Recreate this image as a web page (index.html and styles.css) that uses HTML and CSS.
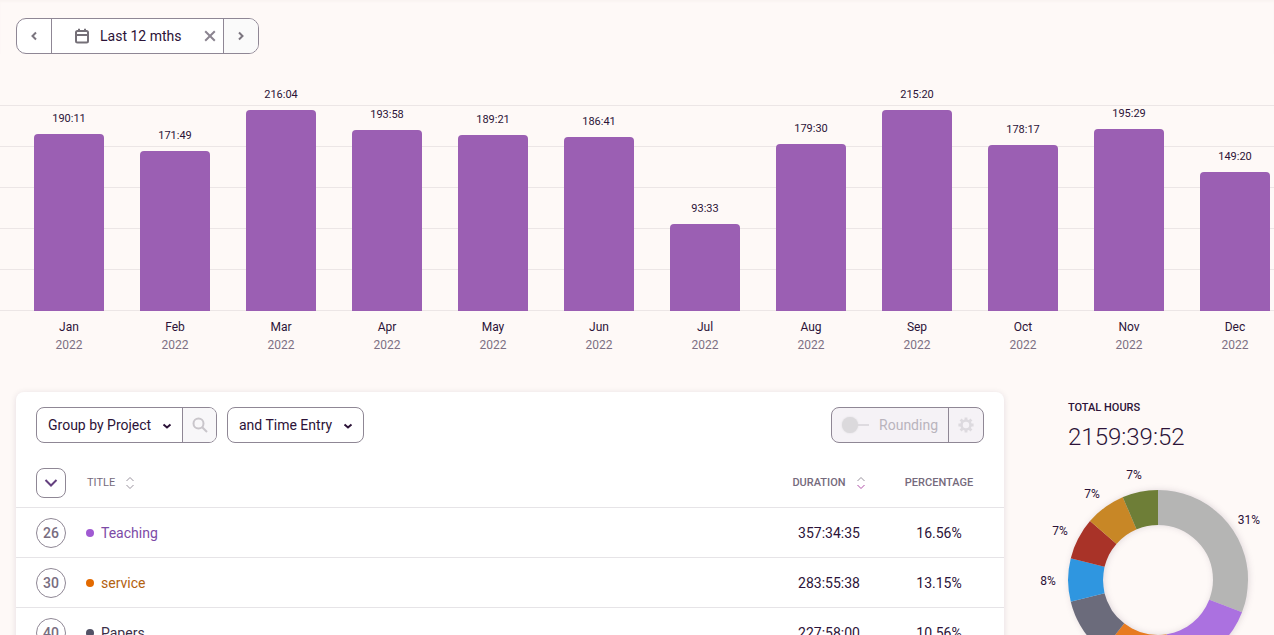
FILE: index.html
```html
<!DOCTYPE html>
<html lang="en">
<head>
<meta charset="utf-8">
<title>Summary report</title>
<link rel="stylesheet" href="styles.css">
</head>
<body>
<div class="page">
  <header class="topbar">
    <div class="group date-range">
      <button class="step" aria-label="Previous period"><svg width="8" height="10" viewBox="0 0 8 10"><path d="M6 1.500 2.500 5 6 8.500"/></svg></button>
      <button class="range">
        <svg class="calendar" width="16" height="16" viewBox="0 0 16 16"><rect x="2" y="3" width="12" height="11.5" rx="1.5"/><path d="M2 7h12M5 .8V4M11 .8V4"/></svg>
        Last 12 mths
      </button>
      <button class="clear" aria-label="Clear range"><svg width="12" height="12" viewBox="0 0 12 12"><path d="m1.200 1.200 9.600 9.600m0-9.600-9.600 9.600"/></svg></button>
      <button class="step next" aria-label="Next period"><svg width="8" height="10" viewBox="0 0 8 10"><path d="M2 1.500 5.500 5 2 8.500"/></svg></button>
    </div>
  </header>

  <section class="chart" aria-label="Hours per month">
    <div class="plot">
      <div class="bars">
        <div class="col"><span class="value">190:11</span><div class="bar" style="height:177px"></div></div>
        <div class="col"><span class="value">171:49</span><div class="bar" style="height:160px"></div></div>
        <div class="col"><span class="value">216:04</span><div class="bar" style="height:201px"></div></div>
        <div class="col"><span class="value">193:58</span><div class="bar" style="height:181px"></div></div>
        <div class="col"><span class="value">189:21</span><div class="bar" style="height:176px"></div></div>
        <div class="col"><span class="value">186:41</span><div class="bar" style="height:174px"></div></div>
        <div class="col"><span class="value">93:33</span><div class="bar" style="height:87px"></div></div>
        <div class="col"><span class="value">179:30</span><div class="bar" style="height:167px"></div></div>
        <div class="col"><span class="value">215:20</span><div class="bar" style="height:201px"></div></div>
        <div class="col"><span class="value">178:17</span><div class="bar" style="height:166px"></div></div>
        <div class="col"><span class="value">195:29</span><div class="bar" style="height:182px"></div></div>
        <div class="col"><span class="value">149:20</span><div class="bar" style="height:139px"></div></div>
      </div>
    </div>
    <div class="months">
      <div>Jan<span>2022</span></div><div>Feb<span>2022</span></div><div>Mar<span>2022</span></div>
      <div>Apr<span>2022</span></div><div>May<span>2022</span></div><div>Jun<span>2022</span></div>
      <div>Jul<span>2022</span></div><div>Aug<span>2022</span></div><div>Sep<span>2022</span></div>
      <div>Oct<span>2022</span></div><div>Nov<span>2022</span></div><div>Dec<span>2022</span></div>
    </div>
  </section>

  <main class="content">
    <section class="panel">
      <div class="toolbar">
        <div class="group">
          <div class="picker">
            <select aria-label="Group by"><option>Group by Project</option></select>
            <svg width="10" height="8" viewBox="0 0 10 8"><path d="m1.500 2.500 3.500 3 3.500-3"/></svg>
          </div>
          <button class="search" aria-label="Search"><svg width="16" height="16" viewBox="0 0 16 16"><circle cx="6.500" cy="6.500" r="5"/><path d="m10.200 10.200 4.800 4.800"/></svg></button>
        </div>
        <div class="group">
          <div class="picker">
            <select aria-label="Then by"><option>and Time Entry</option></select>
            <svg width="10" height="8" viewBox="0 0 10 8"><path d="m1.500 2.500 3.500 3 3.500-3"/></svg>
          </div>
        </div>
        <div class="group rounding">
          <label><input type="checkbox" disabled>Rounding</label>
          <button class="gear" aria-label="Rounding settings" disabled><svg width="16" height="16" viewBox="0 0 16 16"><circle cx="8" cy="8" r="4.500" stroke-width="2.600"/><path stroke-width="2.800" d="M8 .4v3M8 12.600v3M.4 8h3M12.600 8h3M2.600 2.600l2 2M11.400 11.400l2 2M2.600 13.400l2-2M11.400 4.600l2-2"/></svg></button>
        </div>
      </div>

      <table class="entries">
        <colgroup><col class="c-count"><col><col class="c-duration"><col class="c-percent"></colgroup>
        <thead>
          <tr>
            <th><button class="expand" aria-label="Expand all"><svg width="14" height="10" viewBox="0 0 14 10"><path d="m1.500 2 5.500 5.500L12.500 2"/></svg></button></th>
            <th class="title"><span class="sort">TITLE<svg width="10" height="14" viewBox="0 0 10 14"><path d="m1.500 5 3.500-3.500L8.500 5M1.500 9 5 12.500 8.500 9"/></svg></span></th>
            <th><span class="sort strong">DURATION<svg width="10" height="14" viewBox="0 0 10 14"><path d="m1.500 5 3.500-3.500L8.500 5"/><path class="active" d="M1.500 9 5 12.500 8.500 9"/></svg></span></th>
            <th><span class="strong">PERCENTAGE</span></th>
          </tr>
        </thead>
        <tbody>
          <tr><td><button class="count">26</button></td><td class="title teaching"><i></i>Teaching</td><td>357:34:35</td><td>16.56%</td></tr>
          <tr><td><button class="count">30</button></td><td class="title service"><i></i>service</td><td>283:55:38</td><td>13.15%</td></tr>
          <tr><td><button class="count">40</button></td><td class="title papers"><i></i>Papers</td><td>227:58:00</td><td>10.56%</td></tr>
        </tbody>
      </table>
    </section>

    <aside class="summary">
      <h2>TOTAL HOURS</h2>
      <p class="total">2159:39:52</p>
      <svg class="donut" width="236" height="216" viewBox="0 0 236 216" role="img" aria-label="Share of hours by project">
        <g class="ring" transform="rotate(-90 122 116)">
          <circle cx="122" cy="116" r="72.500" pathLength="360" stroke="#b5b5b4" stroke-dasharray="111 249"/>
          <circle cx="122" cy="116" r="72.500" pathLength="360" stroke="#ab71e0" stroke-dasharray="60 300" stroke-dashoffset="-111"/>
          <circle cx="122" cy="116" r="72.500" pathLength="360" stroke="#e77b20" stroke-dasharray="47 313" stroke-dashoffset="-171"/>
          <circle cx="122" cy="116" r="72.500" pathLength="360" stroke="#6b6b7b" stroke-dasharray="38 322" stroke-dashoffset="-218"/>
          <circle cx="122" cy="116" r="72.500" pathLength="360" stroke="#2f96e0" stroke-dasharray="28 332" stroke-dashoffset="-256"/>
          <circle cx="122" cy="116" r="72.500" pathLength="360" stroke="#a93328" stroke-dasharray="27 333" stroke-dashoffset="-284"/>
          <circle cx="122" cy="116" r="72.500" pathLength="360" stroke="#c88726" stroke-dasharray="26 334" stroke-dashoffset="-311"/>
          <circle cx="122" cy="116" r="72.500" pathLength="360" stroke="#6e7e37" stroke-dasharray="23 337" stroke-dashoffset="-337"/>
        </g>
        <text x="213" y="60">31%</text>
        <text x="98" y="15">7%</text>
        <text x="56" y="34">7%</text>
        <text x="24" y="71">7%</text>
        <text x="12" y="121">8%</text>
      </svg>
    </aside>
  </main>
</div>
</body>
</html>
```
FILE: styles.css
```css
* { box-sizing: border-box; }

body {
  margin: 0;
  background: #fef9f7;
  color: #2c1338;
  font: 14px/20px Roboto, "Liberation Sans", sans-serif;
}

.page { height: 100vh; overflow: hidden; }

svg { fill: none; stroke: currentColor; display: block; }

button, select {
  margin: 0;
  padding: 0;
  border: 0;
  background: none;
  color: inherit;
  font: inherit;
}

/* Bordered control groups */
.group {
  display: flex;
  height: 36px;
  border: 1px solid #8f8795;
  border-radius: 8px;
  background: #fff;
  overflow: hidden;
}

.topbar { display: flex; padding: 18px 16px 0; box-shadow: inset 0 2px 2px #faf4f2; }
.date-range { border-radius: 10px; }
.step {
  display: grid;
  place-items: center;
  width: 35px;
  border-right: 1px solid #8f8795;
  color: #7b757f;
  stroke-width: 2;
}
.step.next { border-right: 0; border-left: 1px solid #8f8795; background: #fafafa; }
.range { display: flex; align-items: center; gap: 10px; padding-left: 22px; }
.calendar { color: #757078; stroke-width: 2; }
.clear { display: grid; place-items: center; width: 26px; margin-left: 16px; color: #8b8490; stroke-width: 2; }

/* Monthly bars */
.plot {
  height: 233px;
  margin-top: 24px;
  background: repeating-linear-gradient(to top, #ece6e6 0 1px, transparent 1px 41px);
  background-size: 100% 206px;
  background-position: bottom;
  background-repeat: no-repeat;
}
.bars, .months {
  display: grid;
  grid-template-columns: repeat(12, minmax(0, 1fr));
  margin-left: 16px;
  margin-right: -14px;
}
.bars { height: 100%; }
.col { display: flex; flex-direction: column; justify-content: flex-end; align-items: center; }
.bar { width: 66%; border-radius: 4px 4px 0 0; background: #9b5fb3; }
.value { margin-bottom: 7px; font-size: 11px; line-height: 16px; }
.months { padding-top: 7px; font-size: 12px; line-height: 18px; text-align: center; }
.months span { display: block; color: #7d7084; }

/* Report body */
.content { display: flex; margin-top: 38px; padding-left: 16px; }
.panel {
  flex: 1;
  min-height: 300px;
  padding-top: 15px;
  border-radius: 8px;
  background: #fff;
  box-shadow: 0 1px 6px rgba(44, 19, 56, .12);
}
.toolbar { display: flex; gap: 10px; padding: 0 20px; margin-bottom: 16px; }
.picker { position: relative; display: flex; }
.picker select { appearance: none; padding: 0 30px 0 11px; }
.picker svg { position: absolute; right: 10px; top: 14px; stroke-width: 2; pointer-events: none; }
.search {
  display: grid;
  place-items: center;
  width: 34px;
  border-left: 1px solid #8f8795;
  background: #f8f7f9;
  color: #c9c6cb;
  stroke-width: 2;
}
.rounding { margin-left: auto; background: #f5f2f6; color: #b9b4bd; }
.rounding label { display: flex; align-items: center; gap: 10px; padding: 0 10px; }
.rounding input {
  appearance: none;
  display: flex;
  align-items: center;
  width: 27px;
  height: 16px;
  margin: 0;
  background: linear-gradient(#dedbe0, #dedbe0) center / 100% 2px no-repeat;
}
.rounding input::before {
  content: "";
  width: 16px;
  height: 16px;
  border-radius: 50%;
  background: #dbd9dc;
  box-shadow: 0 0 2px #dbd9dc;
}
.gear { display: grid; place-items: center; width: 35px; border-left: 1px solid #8f8795; color: #dddadf; }

/* Entries table */
.entries { width: 100%; table-layout: fixed; border-collapse: separate; border-spacing: 0; }
.c-count { width: 70px; }
.c-duration { width: 90px; }
.c-percent { width: 130px; }
.entries th, .entries td {
  height: 50px;
  padding: 0;
  border-bottom: 1px solid #e6e4e7;
  text-align: center;
  vertical-align: middle;
}
.entries th { height: 49px; color: #756a7c; font-size: 11px; font-weight: 400; line-height: 16px; white-space: nowrap; }
.entries .title { text-align: left; }
.strong { font-weight: 500; }
.sort { display: inline-flex; align-items: center; gap: 10px; }
.sort svg { color: #9a939e; }
.sort .active { stroke: #b04fa8; }
th.title { padding-left: 1px; }
.expand, .count {
  display: grid;
  place-items: center;
  width: 30px;
  height: 30px;
  margin-left: 20px;
  border: 1px solid #8f8795;
  border-radius: 8px;
}
.expand { color: #64407f; stroke-width: 2; }
.count { border-radius: 50%; color: #786d80; font-weight: 500; }
.title i {
  display: inline-block;
  width: 8px;
  height: 8px;
  margin-right: 7px;
  border-radius: 50%;
  background: currentColor;
  vertical-align: 1px;
}
.teaching { color: #7c4ba6; }
.teaching i { background: #a05ad2; }
.service { color: #b3620f; }
.service i { background: #e36a00; }
.papers { color: #3b3048; }
.papers i { background: #525266; }

/* Totals */
.summary { width: 270px; padding-top: 8px; }
.summary h2 { margin: 0 0 0 64px; font-size: 11px; line-height: 16px; font-weight: 500; }
.total { margin: 5px 0 11px 64px; font-size: 24px; line-height: 32px; font-weight: 300; }
.donut { margin-left: 32px; overflow: visible; }
.ring { stroke-width: 35; filter: drop-shadow(0 1px 3px rgba(44, 19, 56, .15)); }
.donut text { fill: #2c1338; stroke: none; font-size: 12px; text-anchor: middle; }
```
